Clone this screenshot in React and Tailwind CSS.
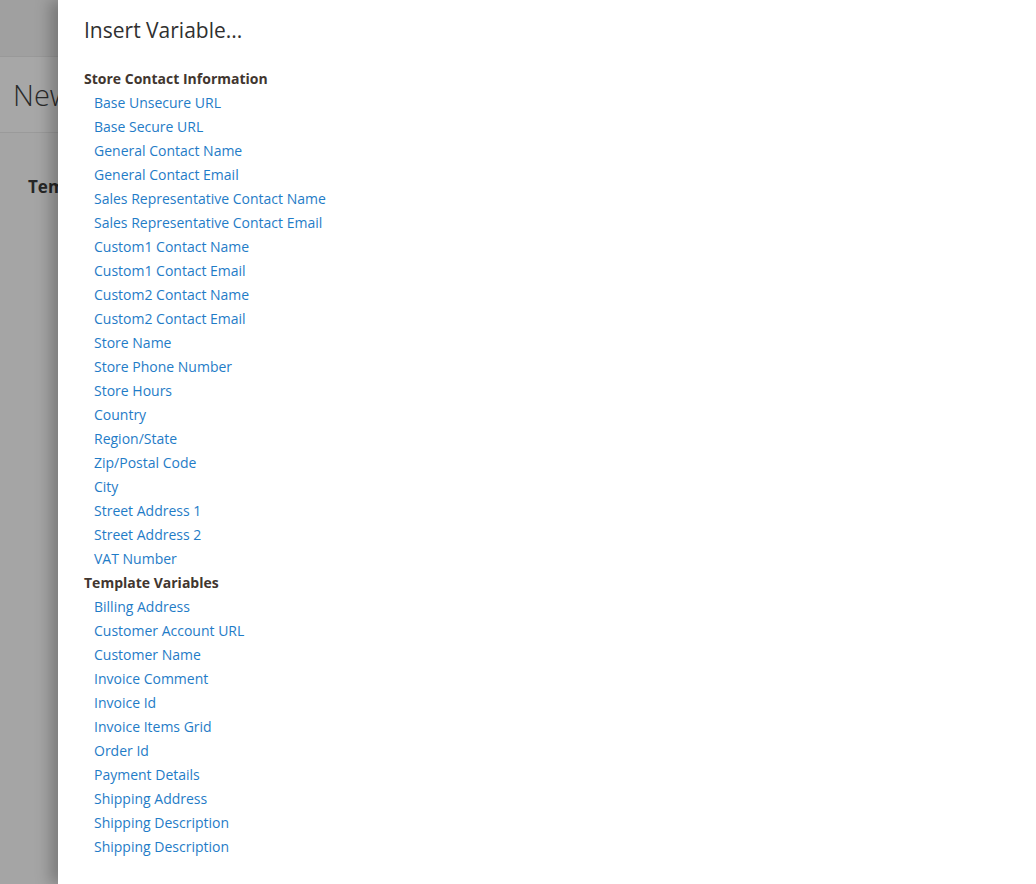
const storeVars = [
  "Base Unsecure URL",
  "Base Secure URL",
  "General Contact Name",
  "General Contact Email",
  "Sales Representative Contact Name",
  "Sales Representative Contact Email",
  "Custom1 Contact Name",
  "Custom1 Contact Email",
  "Custom2 Contact Name",
  "Custom2 Contact Email",
  "Store Name",
  "Store Phone Number",
  "Store Hours",
  "Country",
  "Region/State",
  "Zip/Postal Code",
  "City",
  "Street Address 1",
  "Street Address 2",
  "VAT Number",
];

const templateVars = [
  "Billing Address",
  "Customer Account URL",
  "Customer Name",
  "Invoice Comment",
  "Invoice Id",
  "Invoice Items Grid",
  "Order Id",
  "Payment Details",
  "Shipping Address",
  "Shipping Description",
  "Shipping Description",
];

function Group({ title, items }) {
  return (
    <div>
      <h3 className="text-[14px] leading-[24px] font-bold text-[#41362f]">{title}</h3>
      <ul className="pl-[10px]">
        {items.map((item, i) => (
          <li key={i} className="text-[14px] leading-[24px]">
            <a href="#" className="text-[#1f7cc7] no-underline">{item}</a>
          </li>
        ))}
      </ul>
    </div>
  );
}

export default function App() {
  return (
    <div className="relative h-[884px] w-full overflow-hidden bg-[#a5a5a5] font-['Open_Sans',sans-serif]">
      {/* page behind the overlay */}
      <div className="h-[57px] bg-[#a0a0a0] border-b border-[#999]" />
      <div className="h-[76px] bg-[#a7a7a7] border-b border-[#9a9a9a] flex items-center pl-[13px]">
        <h1 className="text-[29px] font-light text-[#2a2a2a]">New</h1>
      </div>
      <div className="pl-[28px] pt-[41px]">
        <span className="text-[17px] font-bold text-[#262626]">Template</span>
      </div>

      {/* slide-in modal */}
      <aside className="absolute left-[58px] top-0 bottom-0 right-0 bg-white shadow-[-8px_0_14px_rgba(0,0,0,0.25)] pl-[26px] pt-[15px]">
        <h2 className="text-[21px] leading-[30px] text-[#303030]">Insert Variable...</h2>
        <div className="mt-[22px]">
          <Group title="Store Contact Information" items={storeVars} />
          <Group title="Template Variables" items={templateVars} />
        </div>
      </aside>
    </div>
  );
}
